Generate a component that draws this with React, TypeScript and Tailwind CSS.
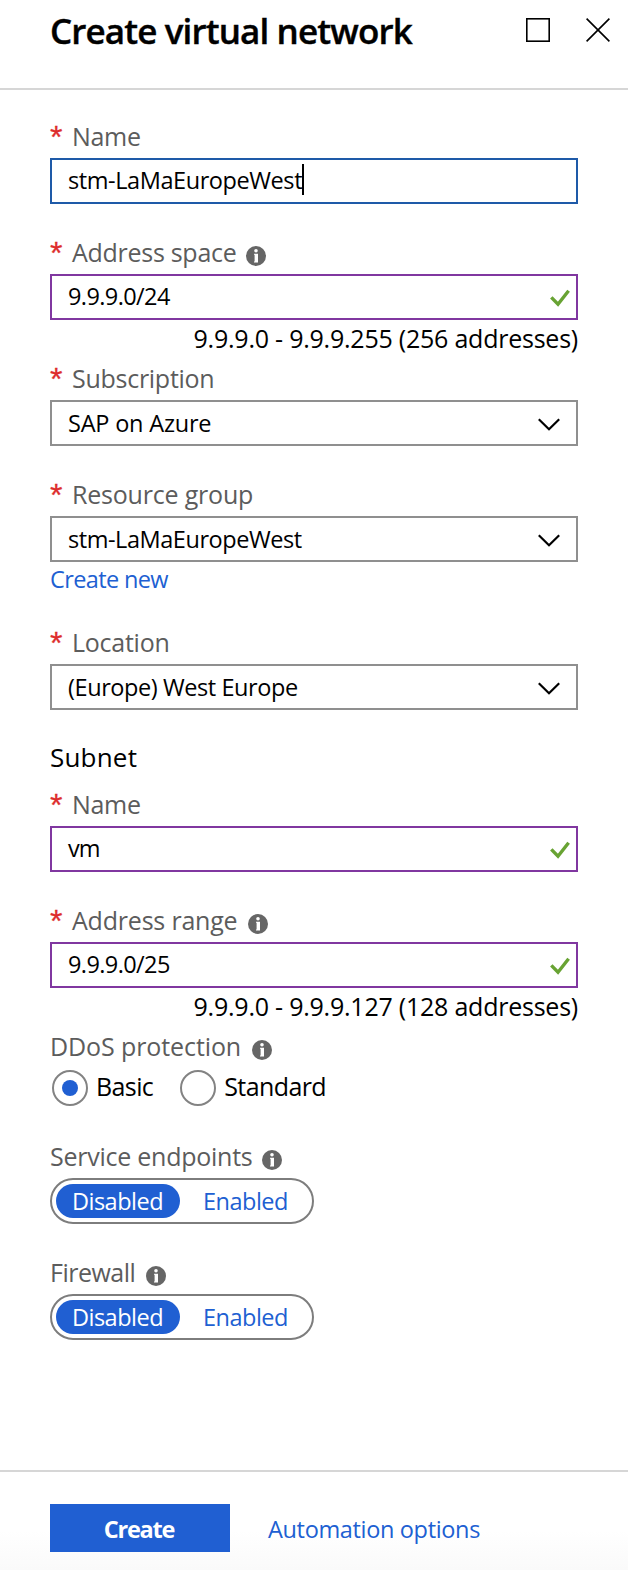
import React from "react";
import { clsx } from "clsx";

function InfoIcon() {
  return (
    <svg width="20" height="20" viewBox="0 0 20 20" className="shrink-0" aria-hidden="true">
      <circle cx="10" cy="10" r="10" fill="#666666" />
      <circle cx="10" cy="4.8" r="1.8" fill="#fff" />
      <path d="M8 7.8h4V16.4H8v-1h.6V8.8H8z" fill="#fff" />
    </svg>
  );
}

function CheckIcon() {
  return (
    <svg width="20" height="18" viewBox="0 0 20 18" className="shrink-0" aria-hidden="true">
      <path d="M1.3 8.4L8 15.2L18.6 1.8" fill="none" stroke="#68a333" strokeWidth="3.4" />
    </svg>
  );
}

function ChevronIcon() {
  return (
    <svg width="22" height="13" viewBox="0 0 22 13" className="shrink-0" aria-hidden="true">
      <path d="M0.8 1.2L11 11.2L21.2 1.2" fill="none" stroke="#000" strokeWidth="2.2" />
    </svg>
  );
}

type LabelProps = {
  text: string;
  className?: string;
  required?: boolean;
  info?: string;
};

function Label({ text, className, required, info }: LabelProps) {
  return (
    <div className="flex h-[42px] text-[25px] leading-10 text-[#5c5c5c]">
      {required && (
        <span className="w-[22px] shrink-0 pt-px font-['Liberation_Sans',sans-serif] text-[32px] text-[#dd2c2c] [-webkit-text-stroke:0.3px_#dd2c2c]">*</span>
      )}
      <span className={className}>{text}</span>
      {info && (
        <span className={clsx("pt-[14px]", info)}>
          <InfoIcon />
        </span>
      )}
    </div>
  );
}

type BoxProps = { value: string; className?: string };

function TextBox({ value, className, focused }: BoxProps & { focused?: boolean }) {
  return (
    <div
      className={clsx(
        "flex h-[46px] items-center border-2 pr-[6px] pl-4 text-[23.5px] leading-10",
        focused ? "border-[#1e5aa8]" : "border-[#8037a0]",
      )}
    >
      <span className={clsx("pb-[2px]", className)}>{value}</span>
      {focused ? (
        <span className="mb-[3px] h-[31px] w-[2px] bg-black" />
      ) : (
        <span className="ml-auto pt-[2px]">
          <CheckIcon />
        </span>
      )}
    </div>
  );
}

function SelectBox({ value, className }: BoxProps) {
  return (
    <div className="flex h-[46px] items-center justify-between border-2 border-[#8f8f8f] pr-4 pl-4 text-[23.5px] leading-10">
      <span className={className}>{value}</span>
      <span className="pt-[3px]">
        <ChevronIcon />
      </span>
    </div>
  );
}

function Hint({ children }: { children: string }) {
  return <div className="h-[38px] text-right text-[25px] leading-9 tracking-[-0.23px]">{children}</div>;
}

function Radio({ label, checked }: { label: string; checked?: boolean }) {
  return (
    <div className="flex items-center gap-2">
      <span className="flex size-9 items-center justify-center rounded-full border-2 border-[#838383]">
        {checked && <span className="size-4 rounded-full bg-[#205fd2]" />}
      </span>
      <span className="pb-[4px] text-[25px] leading-8 tracking-[-0.6px]">{label}</span>
    </div>
  );
}

function Toggle() {
  return (
    <div className="flex h-[46px] w-[264px] items-center rounded-full border-2 border-[#7d7d7d] pl-1 text-[23.5px] leading-8 tracking-[-0.5px]">
      <span className="flex h-[34px] w-[124px] items-center justify-center rounded-full bg-[#205fd2] pr-px text-white">Disabled</span>
      <span className="ml-[23px] text-[#205fd2]">Enabled</span>
    </div>
  );
}

export default function App() {
  return (
    <div className="flex h-[1570px] w-[628px] flex-col bg-white font-['Open_Sans',sans-serif] whitespace-nowrap text-black">
      <header className="flex h-[90px] shrink-0 items-start border-b-2 border-[#d6d6d6] pt-[7px] pl-[50px]">
        <h1 className="w-[476px] text-[35px] leading-[48px] font-semibold tracking-[-0.87px] [-webkit-text-stroke:0.4px_#000]">
          Create virtual network
        </h1>
        <svg width="24" height="24" viewBox="0 0 24 24" className="mt-[11px]" aria-hidden="true">
          <rect x="0.8" y="0.8" width="22.4" height="22.4" fill="none" stroke="#000" strokeWidth="1.6" />
        </svg>
        <svg width="24" height="24" viewBox="0 0 24 24" className="mt-[11px] ml-9" aria-hidden="true">
          <path d="M0.6 0.6L23.4 23.4M23.4 0.6L0.6 23.4" stroke="#000" strokeWidth="1.6" />
        </svg>
      </header>

      <main className="w-[578px] grow pt-[26px] pl-[50px]">
        <Label required text="Name" className="tracking-[-0.3px]" />
        <TextBox focused value="stm-LaMaEuropeWest" className="tracking-[-0.42px]" />

        <div className="h-7" />
        <Label required text="Address space" className="tracking-[-0.28px]" info="ml-[10px]" />
        <TextBox value="9.9.9.0/24" className="tracking-[-0.6px]" />
        <Hint>9.9.9.0 - 9.9.9.255 (256 addresses)</Hint>
        <Label required text="Subscription" className="tracking-[-0.27px]" />
        <SelectBox value="SAP on Azure" className="tracking-[-0.2px]" />

        <div className="h-7" />
        <Label required text="Resource group" className="tracking-[-0.2px]" />
        <SelectBox value="stm-LaMaEuropeWest" className="tracking-[-0.45px]" />
        <div className="h-[60px] pt-px text-[23.5px] leading-8 tracking-[-0.62px] text-[#205fd2]">Create new</div>

        <Label required text="Location" className="tracking-[-0.25px]" />
        <SelectBox value="(Europe) West Europe" className="tracking-[-0.42px]" />

        <h2 className="h-[74px] pt-[27px] text-[26px] leading-10 tracking-[0.2px]">Subnet</h2>
        <Label required text="Name" className="tracking-[-0.3px]" />
        <TextBox value="vm" className="tracking-[-1px]" />

        <div className="h-7" />
        <Label required text="Address range" className="tracking-[-0.2px]" info="ml-[11px]" />
        <TextBox value="9.9.9.0/25" className="tracking-[-0.6px]" />
        <Hint>9.9.9.0 - 9.9.9.127 (128 addresses)</Hint>

        <Label text="DDoS protection" className="tracking-[-0.1px]" info="ml-[11px]" />
        <div className="flex h-10 gap-[27px] pl-[2px]">
          <Radio checked label="Basic" />
          <Radio label="Standard" />
        </div>

        <div className="h-7" />
        <Label text="Service endpoints" className="tracking-[-0.25px]" info="ml-[9px]" />
        <Toggle />

        <div className="h-7" />
        <Label text="Firewall" className="tracking-[-0.5px]" info="ml-[11px]" />
        <Toggle />
      </main>

      <footer className="flex h-[100px] shrink-0 items-start border-t-2 border-[#d6d6d6] bg-linear-to-b from-white from-60% to-[#fafafa] pt-8 pl-[50px] text-[23.5px] leading-[50px]">
        <button className="h-12 w-[180px] bg-[#205fd2] pr-[2px] font-bold tracking-[-1.2px] text-white">Create</button>
        <a className="ml-[38px] tracking-[-0.34px] text-[#205fd2]">Automation options</a>
      </footer>
    </div>
  );
}
